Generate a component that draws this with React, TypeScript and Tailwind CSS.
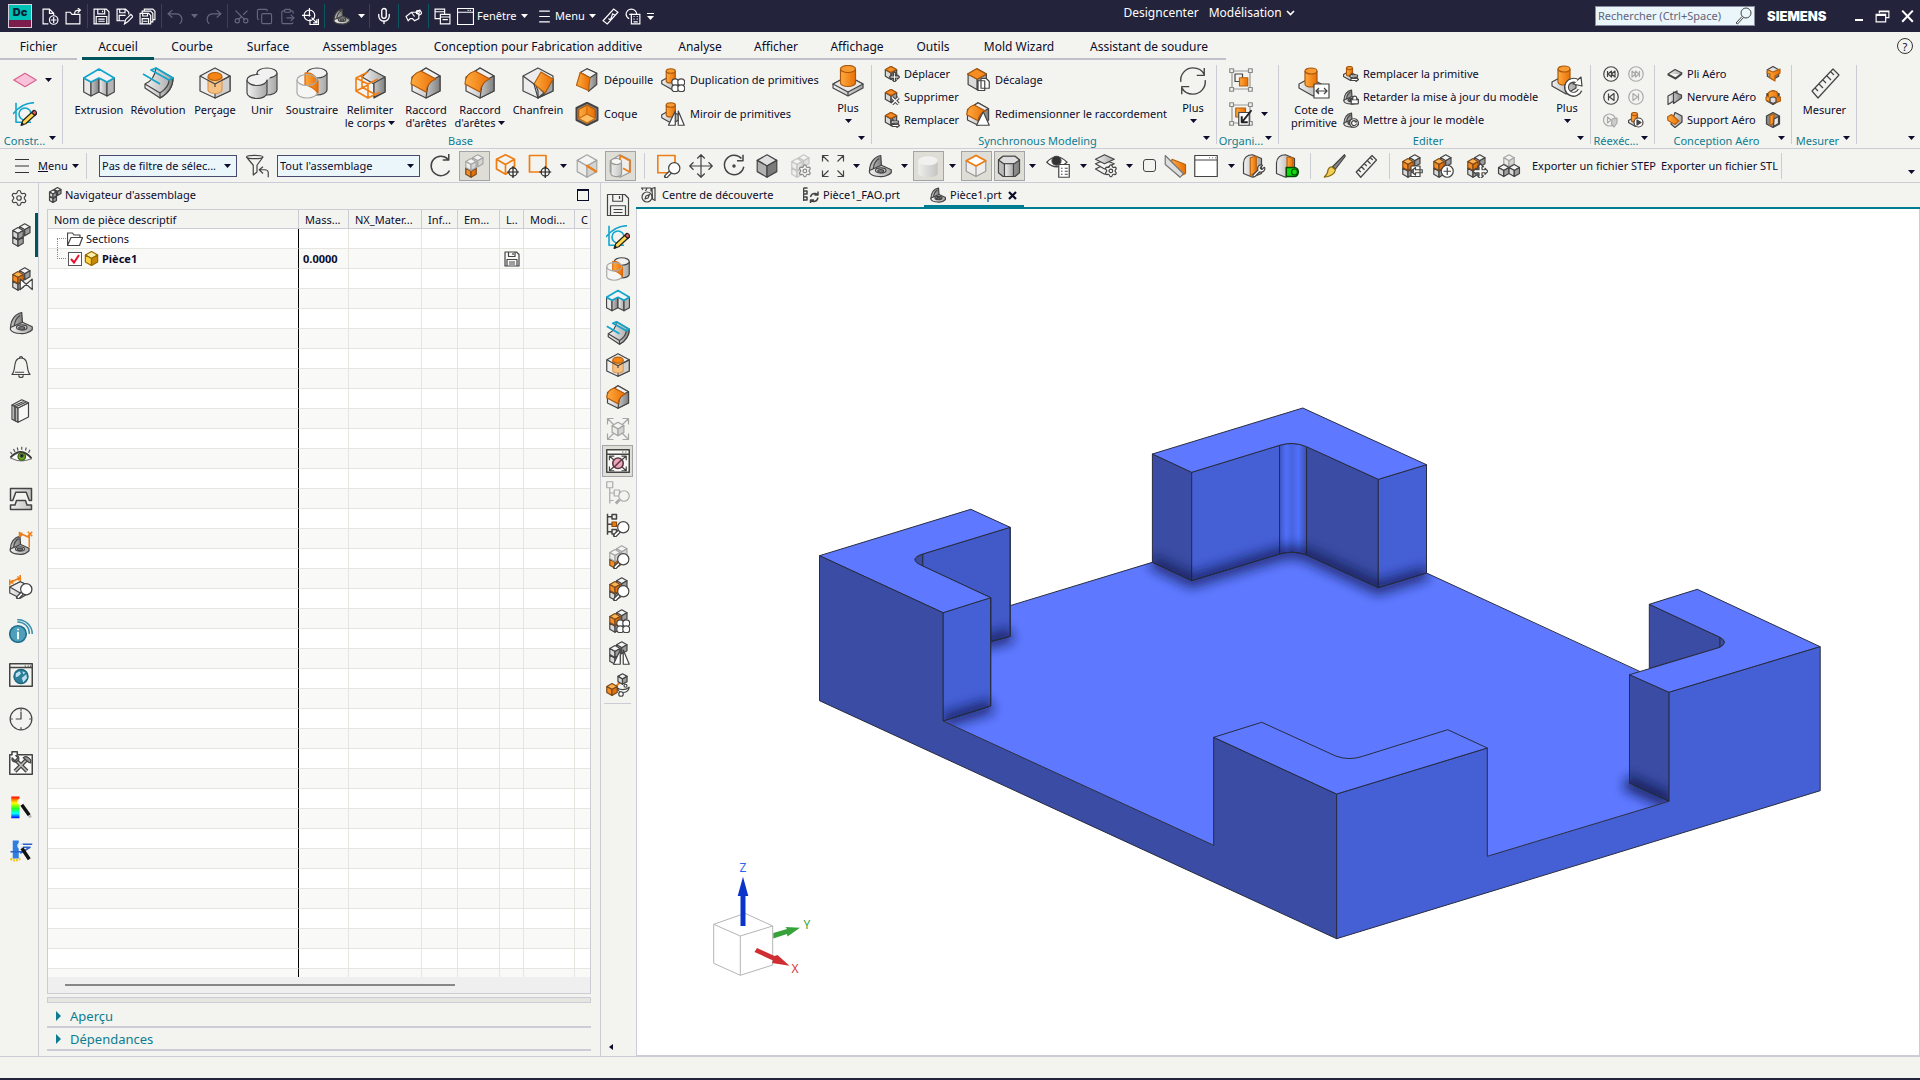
import React, { ReactNode } from "react";
import { Copy, ClipboardPaste, Mic, Scissors, Settings, Wrench, Lock } from "lucide-react";

const INK = "#444444";
const CYAN = "#12a6cc";
const ORANGE = "#ef7d14";

/* ---------- drawing helpers, all on a 32-unit grid ---------- */

type Tone = "g" | "o" | "w" | "y" | "d";
const TONES: Record<Tone, [string, string, string, string]> = {
  g: ["#f4f4f4", "#dadada", "#9d9d9d", INK],
  o: ["#ffb14d", "#f78d22", "#e57208", "#7a4a20"],
  w: ["#f4f4f2", "#ececea", "#d4d4d2", "#a5a5a5"],
  y: ["#fff0a8", "#ffd33f", "#c98a0a", "#9a6a00"],
  d: ["#e0e0e0", "#b2b2b2", "#7b7b7b", INK],
};

function Cube({ x, y, r, t = "g" }: { x: number; y: number; r: number; t?: Tone }) {
  const [top, left, right, line] = TONES[t];
  const w = r * 0.87;
  const h = r / 2;
  return (
    <g stroke={line}>
      <polygon fill={top} points={`${x},${y - r} ${x + w},${y - h} ${x},${y} ${x - w},${y - h}`} />
      <polygon fill={left} points={`${x - w},${y - h} ${x},${y} ${x},${y + r} ${x - w},${y + h}`} />
      <polygon fill={right} points={`${x},${y} ${x + w},${y - h} ${x + w},${y + h} ${x},${y + r}`} />
    </g>
  );
}

function Cyl({ x, y, rx, ry, h, o = false }: { x: number; y: number; rx: number; ry: number; h: number; o?: boolean }) {
  return (
    <g stroke={o ? "#a8570c" : INK}>
      <path fill={o ? "url(#gO)" : "url(#gG)"} d={`M${x - rx} ${y} v${h} a${rx} ${ry} 0 0 0 ${rx * 2} 0 v${-h}`} />
      <ellipse fill={o ? "#f99b30" : "#f1f1f1"} cx={x} cy={y} rx={rx} ry={ry} />
    </g>
  );
}

const Boss = () => (
  <g>
    <path fill="url(#gG)" d="M1 19 L16 11 L31 19 V23 L16 31 L1 23 Z" />
    <path fill="#e9e9e9" d="M1 19 L16 11 L31 19 L16 27 Z" />
    <path d="M16 27 V31" />
    <Cyl x={16} y={4} rx={7.5} ry={3.5} h={14} o />
  </g>
);
const BossSmall = () => (
  <g>
    <path fill="url(#gG)" d="M1 17 L12 11 L25 18 V23 L15 29 L1 21 Z" />
    <Cyl x={13} y={4} rx={6} ry={3} h={13} o />
  </g>
);
const Bracket = () => (
  <g>
    <path fill="url(#gD)" d="M2 23 C2 12 8 4 17 2 L18 16 L8 21 Z" />
    <path fill="url(#gG)" d="M2 22 L18 15 L31 21 V25 C27 29 20 31 15 30 C9 30 4 28 2 25 Z" />
    <path fill="none" d="M7 20 C8 12 11 8 15 6" />
    <ellipse fill="#d7d7d7" cx="17" cy="22" rx="7" ry="3.4" />
    <ellipse fill="#8a8a8a" cx="17" cy="22.5" rx="4" ry="1.8" />
  </g>
);
const Stack = ({ a = "g", b = "g", c = "g" }: { a?: Tone; b?: Tone; c?: Tone }) => (
  <g>
    <Cube x={21} y={9} r={8} t={c} />
    <Cube x={12} y={23} r={8} t={b} />
    <Cube x={12} y={14} r={8} t={a} />
  </g>
);
const Lens = () => (
  <g>
    <path strokeWidth="4" strokeLinecap="round" d="M17 25 L12 30" stroke={INK} />
    <path strokeWidth="1.6" strokeLinecap="round" d="M17 25 L12.5 29.5" stroke="#fff" />
    <circle cx="23" cy="19" r="7.5" fill="#fff" />
  </g>
);
const Four = () => (
  <g fill="#fff">
    <circle cx="19" cy="19" r="4.6" /><circle cx="27" cy="19" r="4.6" />
    <circle cx="19" cy="27" r="4.6" /><circle cx="27" cy="27" r="4.6" />
  </g>
);
const Mirror = () => (
  <g fill="#fff"><path d="M19 12 V31 H10 Z" /><path d="M23 12 V31 H31 Z" /></g>
);
const Swap = () => (
  <path fill="#fff" d="M13 20 L18 15 V18 H29 V22 H18 V25 Z M31 27 L26 22 V25 H16 V29 H26 V31 Z" />
);
const Target = ({ x, y }: { x: number; y: number }) => (
  <g stroke="#222"><circle cx={x} cy={y} r="5.5" fill="#f3f4ef" /><path d={`M${x - 8} ${y} h16 M${x} ${y - 8} v16`} /></g>
);
const Wire = () => <path stroke={ORANGE} strokeWidth="1.7" d="M14 1 L26 7 V20 L14 27 L2 20 V7 Z M2 7 L14 14 L26 7 M14 14 V27" />;
const BlueSketch = () => (
  <g>
    <path stroke={CYAN} strokeWidth="1.6" d="M4 1 V27 H24 M0 16 C8 6 16 1 28 1" />
    <circle stroke={CYAN} strokeWidth="1.6" cx="16" cy="16" r="8" />
    <path fill="#ffd84d" stroke="#222" d="M11 31 L13 25 L27 12 L31 16 L17 29 Z" />
    <path fill="#f05a5a" stroke="#222" d="M25 14 L28 11 Q32 12 31 16 L29 18 Z" />
    <path fill="#222" stroke="#222" d="M11 31 L12 28 L14 30 Z" />
  </g>
);
const Round = () => (
  <g>
    <path fill="url(#gG)" d="M16 1 L30 9 V24 L16 31 L2 24 V10 Z" />
    <path fill="#f2f2f2" d="M16 1 L30 9 L24 13 L10 5 Z" />
    <path fill="url(#gD)" d="M17 24 C17 17 20 13 30 9 V24 L16 31 Z" />
    <path fill="url(#gO)" stroke="#b0570a" d="M1 17 C1 10 4 6 11 4 L26 12 C20 14 17 18 16 25 Z" />
  </g>
);
const Floppy = () => (
  <g>
    <path d="M2 2 H25 L30 7 V30 H2 Z" />
    <path d="M9 2 V11 H22 V2 M18 4 V8 M6 30 V17 H26 V30 M10 22 H22 M10 26 H22" />
  </g>
);
const Corners = ({ c = INK }: { c?: string }) => (
  <path stroke={c} d="M2 10 V2 H10 M2 2 L10 10 M22 2 H30 V10 M30 2 L22 10 M2 22 V30 H10 M2 30 L10 22 M30 22 V30 H22 M30 30 L22 22" />
);
const Win = () => <path fill="#fff" d="M1 2 H31 V30 H1 Z M1 8 H31 M20 5 h1 M24 5 h1 M28 5 h1" />;
const Ruler32 = () => (
  <path d="M3 24 L24 2 L30 8 L9 31 Z M6 21 l3 3 M10 17 l4 4 M14 13 l3 3 M18 9 l4 4 M22 5 l3 3" />
);
const GearMini = () => <Settings x={13} y={13} width={19} height={19} strokeWidth={1.2} color={INK} fill="#f3f4ef" />;
const Play = ({ d, c = INK }: { d: string; c?: string }) => (
  <g stroke={c}><circle cx="16" cy="16" r="14.5" /><path d={d} /></g>
);
const Frame = ({ children }: { children: ReactNode }) => (
  <g>
    <path stroke="#999" d="M4 4 H28 V28 H4 Z" />
    <g fill="#f3f4ef" stroke="#888"><path d="M1 1h5v5h-5z M26 1h5v5h-5z M1 26h5v5h-5z M26 26h5v5h-5z" /></g>
    {children}
  </g>
);

const ART: Record<string, ReactNode> = {
  plane: <path fill="#f8c3d8" stroke="#d9608f" d="M1 16 L16 7 L31 16 L16 25 Z" />,
  sketch: <BlueSketch />,
  extrude: (
    <g>
      <path fill="#e8e8e8" d="M.7 11 L8 15 V29 L.7 25 Z" />
      <path fill="url(#gD)" d="M8 15 L16 11 V25 L8 29 Z" />
      <path fill="url(#gG)" d="M16 11 L24 15 V29 L16 25 Z" />
      <path fill="#b5b5b5" d="M24 15 L31.3 11 V25 L24 29 Z" />
      <path fill="#f4f4f4" stroke={CYAN} strokeWidth="1.7" d="M16 2 L31.3 11 L24 15 L16 11 L8 15 L.7 11 Z" />
    </g>
  ),
  revolve: (
    <g>
      <path fill="url(#gG)" d="M3 17 V21 L18 31 C27 26 31 20 31 11 L14 1 C13 9 10 14 3 17 Z" />
      <path fill="url(#gD)" d="M18 26 C24 22 27 18 27 13 L31 11 C31 20 27 26 18 31 Z" />
      <path d="M3 17 L18 26" />
      <path stroke={CYAN} strokeWidth="1.7" d="M9 3 L14 1 L31 11 L27 13 Z M1 7 L18 17" />
    </g>
  ),
  hole: (
    <g>
      <path fill="#eeeeee" d="M16 1 L31 9 V24 L16 31 L1 24 V9 Z" />
      <path fill="#cfcfcf" d="M16 17 L31 9 V24 L16 31 Z" />
      <path fill="#f5c183" stroke="#d99a58" d="M9 10 V23 a7 3.5 0 0 0 14 0 V10" />
      <ellipse fill="#f58414" stroke="#b8600c" cx="16" cy="9.5" rx="7" ry="4" />
      <path d="M1 9 L16 17 L31 9 M16 17 V20" />
    </g>
  ),
  unite: (
    <g>
      <Cyl x={21} y={6} rx={10} ry={5} h={17} />
      <Cyl x={11} y={13} rx={10} ry={5.5} h={13} />
      <ellipse cx="17" cy="10" rx="7" ry="3.2" fill="#f1f1f1" stroke="none" />
    </g>
  ),
  subtract: (
    <g>
      <Cyl x={21} y={6} rx={10} ry={5} h={17} />
      <path fill="#f6f6f4" stroke="#aaa" d="M1 13 V26 a10 5 0 0 0 20 0 V13" />
      <path fill="url(#gO)" stroke="#d9680a" d="M9 6 C14 5 19 8 22 14 V26 C18 21 14 19 9 18 Z" />
      <ellipse cx="11" cy="13" rx="10" ry="5.5" stroke="#aaa" />
    </g>
  ),
  trim: (
    <g>
      <path fill="url(#gG)" d="M16 2 L31 10 V25 L20 31 V17 L8 10 Z" />
      <path fill="url(#gD)" d="M20 16 L31 10 V25 L20 30 Z" />
      <path stroke={ORANGE} strokeWidth="1.6" d="M2 11 L14 5 M2 11 L14 17 L14 31 L2 24 Z M14 17 L24 12 M8 7 V20 L22 28 M14 31 L26 25 M2 24 L14 18" />
    </g>
  ),
  blend: <Round />,
  chamfer: (
    <g>
      <path fill="#ececec" d="M16 1 L31 9 V24 L16 31 L1 24 V9 Z" />
      <path fill="#d2d2d2" d="M13 16 L22 26 L16 31 L16 24 Z" />
      <path fill="#a5a5a5" d="M31 12 V24 L16 31 L23 26 Z" />
      <path fill="url(#gO)" stroke="#b8600c" d="M19 5 L31 12 L23 26 L12 17 Z" />
      <path d="M1 9 L12 17 L16 31" />
    </g>
  ),
  draft: (
    <g>
      <path fill="url(#gD)" d="M16 1 L29 7 V22 L18 31 L18 13 Z" />
      <path fill="#f4f4f4" d="M16 1 L29 7 L20 13 L7 6 Z" />
      <path fill="url(#gO)" stroke="#b8600c" d="M7 6 L20 13 L18 30 L2 23 Z" />
    </g>
  ),
  shell: (
    <g>
      <path fill="#9a9a9a" strokeWidth="2" d="M16 1 L30 8 V24 L16 31 L2 24 V8 Z" />
      <path fill="url(#gO)" stroke="#a8570c" d="M16 4 L27 10 V22 L16 28 L5 22 V10 Z" />
      <path fill="#ffbd62" stroke="#c96a10" d="M5 22 L16 16 L27 22 L16 28 Z" />
      <path stroke="#c96a10" d="M16 4 V16" />
    </g>
  ),
  pattern: <g><BossSmall /><Four /></g>,
  mirrorf: <g><BossSmall /><Mirror /></g>,
  boss: <Boss />,
  bossdim: (
    <g><BossSmall /><path fill="#fff" d="M16 17 H31 V31 H16 Z M18 24 H29 M21 21 L18 24 L21 27 M26 21 L29 24 L26 27" /></g>
  ),
  bossredo: (
    <g><BossSmall />
      <path stroke={INK} strokeWidth="5" d="M27 17 A7 7 0 1 0 29 25" /><path fill="#fff" d="M22 19 L31 21 L30 12 Z" />
      <path stroke="#fff" strokeWidth="2.6" d="M26 16 A7 7 0 1 0 29 25" />
    </g>
  ),
  bossswap: <g><BossSmall /><Swap /></g>,
  bossplay: <g><BossSmall /><circle cx="21" cy="21" r="9" fill="#fff" /><path fill={INK} d="M18 16 L26 21 L18 26 Z" /></g>,
  moveface: (
    <g><Cube x={14} y={14} r={13} /><path fill="#f78d22" stroke="#a8570c" d="M14 1 L25 7 L14 13 L3 7 Z" />
      <path fill="#fff" d="M21 12 l4 4 h-2 v4 h4 v-2 l4 4 l-4 4 v-2 h-4 v4 h2 l-4 4 l-4 -4 h2 v-4 h-4 v2 l-4 -4 l4 -4 v2 h4 v-4 h-2z" /></g>
  ),
  delface: (
    <g><Cube x={14} y={14} r={13} /><path fill="#f78d22" stroke="#a8570c" d="M14 1 L25 7 L14 13 L3 7 Z" />
      <path strokeWidth="3.4" d="M16 17 L29 30 M29 17 L16 30" /><path stroke="#fff" strokeWidth="1.4" d="M16 17 L29 30 M29 17 L16 30" /></g>
  ),
  repface: <g><Cube x={14} y={14} r={13} /><path fill="#f78d22" stroke="#a8570c" d="M14 1 L25 7 L14 13 L3 7 Z" /><Swap /></g>,
  offset: (
    <g><Cube x={15} y={15} r={14} /><path fill="#f78d22" stroke="#a8570c" d="M14 1 L27 8 L15 15 L2 8 Z" />
      <path fill="#fff" d="M20 14 H27 L31 18 V27 H20 Z M16 17 H25 V30 H16 Z" /></g>
  ),
  resize: <g><Round /><path fill="#fff" d="M23 13 L31 31 H14 Z" /></g>,
  cycle: <path strokeWidth="1.4" d="M3 17 C2 9 8 2 16 2 C22 2 26 5 28 9 M28 2 V10 H20 M29 15 C30 23 24 30 16 30 C10 30 6 27 4 23 M4 30 V22 H12" />,
  group: <Frame><path fill="#f3f4ef" d="M8 8 H18 V18 H8 Z" /><path fill="url(#gO)" stroke="#b8600c" d="M14 13 H25 V24 H14 Z" /></Frame>,
  groupedit: (
    <Frame><path fill="url(#gO)" stroke="#b8600c" d="M9 8 H22 V20 H9 Z" /><path fill="#fff" d="M13 14 H27 V31 H13 Z" />
      <path strokeWidth="2" stroke="#222" d="M30 11 L18 26 M17 19 V27 H25" /></Frame>
  ),
  lockmodel: <g><Bracket /><Lock x={14} y={12} width={19} height={20} strokeWidth={1.2} color={INK} fill="#fff" /></g>,
  updmodel: <g><Bracket /><circle cx="22" cy="22" r="8.5" fill="#fff" /><path d="M26 19 A5 5 0 1 0 27 23 M27 17 V20 H23" /></g>,
  rew: <Play d="M9 10 V22 M17 10 L10 16 L17 22 Z M24 10 L17 16 L24 22 Z" />,
  fwd: <Play c="#aaa" d="M23 10 V22 M15 10 L22 16 L15 22 Z M8 10 L15 16 L8 22 Z" />,
  prev: <Play d="M11 9 V23 M22 9 L13 16 L22 23 Z" />,
  next: <Play c="#aaa" d="M21 9 V23 M10 9 L19 16 L10 23 Z" />,
  playto: <g stroke="#aaa"><circle cx="13" cy="16" r="12" /><path d="M9 10 V22 L16 16 Z" /><path fill="#ccc" d="M18 14 L28 12 V22 L22 30 L17 24 Z" /></g>,
  fold: <path fill="url(#gG)" d="M2 16 L16 7 L30 14 L17 24 Z M2 16 V18 L17 26 L30 16" />,
  rib: <g><path fill="url(#gG)" d="M2 14 L20 4 V20 L2 31 Z" /><path fill="url(#gD)" d="M13 6 L29 12 V18 L13 29 Z" /></g>,
  support: <g><path fill="url(#gG)" d="M16 1 L30 8 V20 L16 31 L8 24 Z" /><path fill="url(#gO)" stroke="#b8600c" d="M1 10 L9 5 L24 18 L16 25 L2 17 Z" /></g>,
  aero1: <g><Cube x={16} y={14} r={13} t="d" /><path fill="url(#gO)" stroke="#b8600c" d="M5 8 L16 12 L30 6 V14 L20 20 V30 L10 24 V16 L4 14 Z" /></g>,
  aero2: <g><Cube x={16} y={17} r={14} /><path fill="url(#gO)" stroke="#b8600c" d="M7 9 C7 2 25 2 25 9 V16 H31 V24 L16 29 L2 22 V16 H7 Z" /><path fill="#ddd" d="M10 18 Q16 14 22 18 V26 L16 29 L10 26 Z" /></g>,
  aero3: <g><path fill="#8a8a8a" d="M16 1 L29 8 V24 L16 31 L3 24 V8 Z" /><path fill="url(#gO)" stroke="#b8600c" d="M10 7 L18 4 V22 L10 27 Z" /><path fill="#e7e7e7" d="M18 14 L27 9 V23 L17 29 Z" /></g>,
  ruler: <Ruler32 />,
  filter: <path d="M2 4 C2 1 24 1 24 4 L16 15 V24 L11 28 V15 Z M2 4 C3 7 23 7 24 4 M31 31 V25 Q31 21 26 21 H20 M24 17 L19 21 L24 26" />,
  reset: <path strokeWidth="1.5" d="M28 7 A13 13 0 1 0 30 22 M29 0 V8 H21" />,
  selasm: <Stack a="w" b="o" c="w" />,
  selcube: <g><Wire /><Target x={24} y={24} /></g>,
  selbox: <g><path stroke={ORANGE} strokeWidth="1.7" d="M2 2 H24 V24 H2 Z" /><Target x={23} y={24} /></g>,
  faceedge: <g><Cube x={16} y={16} r={15} t="w" /><path stroke={ORANGE} strokeWidth="2.2" d="M15 15 L29 24" /></g>,
  cylcube: (
    <g stroke="#999"><path fill="#eeeeec" d="M16 1 L30 8 V24 L16 31 L3 24 V9 Z" /><path fill="url(#gS)" d="M4 11 V25 a7 4 0 0 0 14 2 V12" /><ellipse cx="11" cy="10" rx="7" ry="4" fill="#f6f6f4" />
      <path stroke={ORANGE} strokeWidth="1.7" d="M16 2 L29 9 V24 L20 19 M16 2 V8" /></g>
  ),
  zoombox: <g><path stroke={ORANGE} strokeWidth="1.7" d="M1 2 H24 V25 H1 Z" /><Lens /></g>,
  pan: <path d="M16 1 V31 M1 16 H31 M11 6 L16 1 L21 6 M11 26 L16 31 L21 26 M6 11 L1 16 L6 21 M26 11 L31 16 L26 21" />,
  orbit: <g><path strokeWidth="1.5" d="M26 6 A13 13 0 1 0 29 17 M28 1 V9 H20" /><circle cx="16" cy="16" r="1.5" fill={INK} /></g>,
  cubed: <Cube x={16} y={16} r={15} t="d" />,
  cubegear: <g opacity=".6"><Stack a="w" b="w" c="w" /><GearMini /></g>,
  fit: <Corners />,
  bracket: <Bracket />,
  shaded: <g stroke="none"><path fill="url(#gS)" d="M3 9 V26 a13 5 0 0 0 26 0 V9" /><ellipse cx="16" cy="9" rx="13" ry="6" fill="#f0f0ee" /></g>,
  wirecube: <g stroke="#999"><path fill="#eeeeec" d="M16 2 L29 9 V23 L16 30 L3 23 V9 Z M16 16 V30" /><path fill="#fff" stroke={ORANGE} strokeWidth="1.8" d="M16 2 L29 9 L16 16 L3 9 Z" /></g>,
  cylhex: <g><path fill="url(#gD)" d="M8 3 H24 L30 8 V25 L24 30 H8 L2 25 V8 Z" /><path fill="#ddd" d="M8 3 H24 L30 8 L23 13 H9 L2 8 Z" /><path fill="url(#gG)" d="M10 13 H22 V30 H10 Z" /></g>,
  eyelist: (
    <g><path fill="#fff" d="M1 11 Q14 -3 28 11 Q14 23 1 11 Z" /><circle cx="14" cy="9" r="6" fill="#333" />
      <path fill="#fff" d="M17 14 H31 V31 H17 Z" /><path d="M20 19h2 M25 19h4 M20 23h2 M25 23h4 M20 27h2 M25 27h4" /></g>
  ),
  layers: (
    <g><path fill="#f3f4ef" d="M2 20 L14 14 L27 20 L14 27 Z" /><path fill="#f3f4ef" d="M2 13 L14 8 L27 13 L14 20 Z" />
      <path fill="url(#gG)" d="M2 7 L14 1 L27 7 L14 13 Z" /><GearMini /></g>
  ),
  section: <g><path fill="url(#gO)" stroke="#b8600c" d="M12 7 L30 14 V26 L22 30 L10 18 Z" /><path fill="#ddd" stroke="#777" d="M3 2 L27 26 L23 31 L3 14 Z" /></g>,
  win: <Win />,
  partwrench: (
    <g><path fill="url(#gG)" d="M2 26 V12 Q3 1 14 1 L26 6 V26 L14 31 Z" /><path fill="url(#gO)" stroke="#b8600c" d="M11 5 L19 3 V24 L11 29 Z" />
      <Wrench x={13} y={13} width={19} height={19} strokeWidth={1.2} color={INK} fill="#fff" /></g>
  ),
  partgreen: (
    <g><path fill="url(#gG)" d="M2 26 V12 Q3 1 14 1 L26 6 V26 L14 31 Z" /><path fill="url(#gO)" stroke="#b8600c" d="M16 4 L24 5 V22 L16 24 Z" />
      <path fill="#0ddc0d" stroke="#044d04" strokeWidth="1.6" d="M15 18 H26 a5 6 0 0 1 0 12 H15 Z" /><circle cx="26" cy="24" r="4" stroke="#044d04" /></g>
  ),
  brush: <g><path fill="#888" d="M30 1 L31 3 L18 20 L14 17 Z" /><path fill="#f3cf5a" stroke="#8a6d10" d="M13 17 L18 21 Q17 29 3 31 Q8 26 8 21 Q10 17 13 17 Z" /></g>,
  asmin: <g><Stack a="o" /><path fill="#fff" d="M16 16 H28 V30 H16 Z M31 21 H22 V18 L16 23 L22 28 V25 H31 Z" /></g>,
  asmplus: <g><Stack a="o" /><circle cx="23" cy="23" r="8" fill="#fff" /><path d="M23 18 V28 M18 23 H28" /></g>,
  asmmove: (
    <g><Stack a="o" />
      <path fill="#fff" d="M22 13 l4 4 h-2 v4 h4 v-2 l4 4 l-4 4 v-2 h-4 v4 h2 l-4 4 l-4 -4 h2 v-4 h-4 v2 l-4 -4 l4 -4 v2 h4 v-4 h-2z" /></g>
  ),
  three: <g><Cube x={16} y={9} r={8} t="w" /><Cube x={9} y={22} r={8} /><Cube x={23} y={22} r={8} /></g>,
  asm: <Stack />,
  asmcons: <g><Stack a="o" /><path fill="#fff" d="M15 16 L31 30 V16 L15 30 Z" /></g>,
  asmlens: <g><Stack a="w" b="o" c="w" /><Lens /></g>,
  asmlens2: <g><Stack a="o" /><Lens /></g>,
  asmfour: <g><Stack a="o" /><Four /></g>,
  asmmirror: <g><Stack /><Mirror /></g>,
  explode: (
    <g><path stroke={ORANGE} strokeWidth="2" d="M11 20 L20 11" /><Cube x={22} y={8} r={7} /><Cube x={8} y={22} r={8} t="o" />
      <path fill="#fff" d="M15 20 Q23 25 31 19 Q30 26 22 26 Q16 25 15 20 Z" /><circle cx="20" cy="28" r="3" fill="#fff" /><circle cx="26" cy="17" r="2" fill="#fff" /></g>
  ),
  gear: <Settings width={32} height={32} strokeWidth={1.2} color={INK} />,
  bell: <path d="M16 4 C8 4 8 12 7 19 Q6 24 4 26 H28 Q26 24 25 19 C24 12 24 4 16 4 Z M14 4 a2 2 0 0 1 4 0 M13 27 a3 3 0 0 0 6 0 M8 23 H20" />,
  books: <g fill="#f8f8f6"><path d="M4 8 L12 12 V31 L4 27 Z" /><path d="M12 12 L26 5 V24 L12 31 Z" /><path d="M4 8 L17 1 L26 5 L12 12 Z M7 9 L20 3 M10 10 L23 4 M7 10 V29 M9 11 V30" /></g>,
  eye: (
    <g><path fill="#fff" stroke="#777" d="M2 20 Q16 6 30 21 Q16 27 2 20 Z" /><circle cx="17" cy="18" r="5" fill="#6cae1f" stroke="#2d5a0c" />
      <circle cx="17" cy="17" r="2" fill="#111" /><path stroke="#333" strokeWidth="1.6" d="M2 19 Q16 4 30 20" />
      <path stroke="#555" d="M4 15 L2 12 M8 12 L6 8 M12 10 L11 6 M17 9 V5 M22 10 L23 6 M26 13 L28 9" /></g>
  ),
  mold: <g fill="url(#gS)" strokeWidth="1.5"><path d="M2 2 H30 V18 H27 L23 7 H9 L5 18 H2 Z" /><path d="M2 30 V24 H8 L10 18 H22 L24 24 H30 V30 Z" /></g>,
  bracketdim: <g><g transform="translate(0 5) scale(.86)"><Bracket /></g><path stroke={ORANGE} strokeWidth="1.5" d="M14 1 V8 M14 3 L28 9 M18 3 L14 3 L17 7 M27 4 V22 M25 1 L31 7 M31 1 L25 7" /></g>,
  blockdim: (
    <g><path fill="url(#gG)" d="M1 16 L15 9 L30 16 V22 L15 31 L1 24 Z" /><path fill="#f0f0f0" d="M1 16 L15 9 L30 16 L15 24 Z M15 24 V31" />
      <path stroke={ORANGE} strokeWidth="1.5" d="M1 6 V14 M15 0 V8 M2 10 L14 4 M5 7 L2 10 L6 11 M11 2 L14 4 L12 7" /><Lens /></g>
  ),
  info: (
    <g><circle cx="12" cy="20" r="11" fill="#4f9fbb" stroke="#1c6e8c" strokeWidth="1.6" /><path stroke="#fff" strokeWidth="1.8" d="M12 17 V27 M12 13 V15" />
      <path stroke="#3c8fae" strokeWidth="1.5" d="M11 4 A15 15 0 0 1 27 20 M11 1 A19 19 0 0 1 31 20" /></g>
  ),
  globe: (
    <g><path strokeWidth="1.5" d="M1 1 H31 V31 H1 Z M1 6 H31 M21 4 h1 M25 4 h1 M28 4 h1" /><circle cx="16" cy="18" r="9.5" fill="#2d7f9c" stroke="#1b6480" />
      <path fill="#bfe3ee" stroke="none" d="M9 14 L14 11 L16 14 L12 18 L9 19 Z M17 20 L23 15 L24 20 L19 26 Z M18 11 L22 13 L19 15 Z" /></g>
  ),
  clock: <g><circle cx="16" cy="16" r="14.5" /><path d="M16 6 V16 H9 M16 2 V5 M16 27 V30 M2 16 H5 M27 16 H30" /></g>,
  tools: (
    <g><path fill="#fafaf8" strokeWidth="1.5" d="M1 5 H4 V1 H11 V5 H31 V31 H1 Z" /><path strokeWidth="4" d="M8 27 L24 11 M9 12 L24 27" />
      <path stroke="#bbb" strokeWidth="1.6" d="M8 27 L24 11 M9 12 L24 27" /><path fill="#999" d="M4 9 L8 13 L12 9 L9 6 Q14 6 13 12 L9 15 Q3 14 4 9 Z M19 9 Q24 5 29 12 V16 L26 15 Z" /></g>
  ),
  spectrum: (
    <g stroke="none"><path fill="url(#gR)" d="M3 2 H14 V31 H3 Z" /><path stroke="#111" strokeWidth="3.4" d="M17 13 L27 27" />
      <path stroke="#bbb" strokeWidth="3" d="M27 27 L29 30" /><circle cx="15" cy="9" r="4" fill="#fff" opacity=".8" /></g>
  ),
  analysis: (
    <g stroke="none"><path fill="#2f7fe0" d="M5 2 H13 V26 H5 Z" /><path stroke="#2b5fc9" strokeWidth="1.6" d="M14 7 H31 M15 11 H28 L15 19 M2 17 H22" />
      <path stroke="#f2c51c" strokeWidth="2.4" strokeDasharray="2 1" d="M2 26 Q8 31 15 26" /><path stroke="#111" strokeWidth="3.4" d="M17 12 L27 27" />
      <circle cx="15" cy="9" r="4" fill="#fff" opacity=".8" /></g>
  ),
  floppy: <Floppy />,
  fitgray: <g><Corners c="#a5a5a5" /><Cube x={16} y={16} r={9} t="w" /></g>,
  winno: (
    <g><path fill="#f8f8f4" strokeWidth="1.5" d="M1 1 H31 V31 H1 Z M1 7 H31 M22 4h1 M26 4h1" /><g transform="translate(3 8) scale(.8 .7)"><Corners /></g>
      <circle cx="16" cy="19" r="7" fill="#f2a6be" stroke="#5a3a44" strokeWidth="1.6" /><path stroke="#5a3a44" strokeWidth="1.6" d="M11 24 L21 14" /></g>
  ),
  treegray: <g stroke="#aaa"><path d="M1 1 H9 V9 H1 Z M5 9 V30 M5 16 H11 M5 26 H10 M11 12 H18 V20 H11 Z" /><circle cx="24" cy="20" r="7" fill="#f3f4ef" /><path strokeWidth="3" d="M18 25 L13 30" /></g>,
  tree: (
    <g><path strokeWidth="1.5" d="M2 1 V29 M2 5 H8 M2 15 H8 M2 25 H8 M8 2 H14 V8 H8 Z M8 22 H14 V28 H8 Z" />
      <path fill={ORANGE} stroke="#8a4a0a" d="M8 12 H14 V18 H8 Z" /><Lens /></g>
  ),
  discover: <g><path d="M4 6 L1 2 H12 L9 8 M12 2 H20 V9 M22 3 L28 1 V27 L23 24 Z" /><circle cx="12" cy="20" r="10" fill="#f3f4ef" /><path d="M8 24 L10 18 L17 15 L14 22 Z" /></g>,
  cam: <g><path strokeWidth="1.5" d="M1 2 H9 M1 2 V28 M1 8 H8 V14 H1 M1 20 H8 V26 H1" /><path strokeWidth="1.5" d="M15 20 Q17 12 25 13 L29 15 M30 9 V16 H23 M30 21 Q28 30 20 29 L16 27 M15 32 V26 H22" /></g>,
  folder: <path fill="#fff" d="M1 29 V4 H11 L14 8 H26 V13 M1 29 L8 13 H31 L25 29 Z" />,
  part: <Cube x={16} y={16} r={15} t="y" />,
};

function Art({ n, s = 24 }: { n: string; s?: number }) {
  return (
    <svg
      width={s} height={s} viewBox="0 0 32 32" fill="none" stroke={INK} strokeWidth="1.2" strokeLinejoin="round"
      aria-hidden="true" className="shrink-0 [&_*]:[vector-effect:non-scaling-stroke]"
    >
      {ART[n]}
    </svg>
  );
}

function Caret({ className = "" }: { className?: string }) {
  return (
    <svg viewBox="0 0 7 4" aria-hidden="true" className={"h-1 w-[7px] shrink-0 fill-current " + className}>
      <path d="M0 0 H7 L3.5 4 Z" />
    </svg>
  );
}

/* ---------- title bar ---------- */

const T = ({ children, label, w = "w-[23px]", dim = false }: { children: ReactNode; label: string; w?: string; dim?: boolean }) => (
  <button type="button" aria-label={label} className={"flex h-full shrink-0 items-center justify-center " + w + (dim ? " text-[#67677c]" : " text-white")}>
    {children}
  </button>
);
const G16 = ({ d, children }: { d?: string; children?: ReactNode }) => (
  <svg width="17" height="17" viewBox="0 0 16 16" fill="none" stroke="currentColor" strokeWidth="1.1" aria-hidden="true">
    {d && <path d={d} />}
    {children}
  </svg>
);
const TSep = () => <span className="mx-0.5 h-6 w-px shrink-0 bg-[#0b5660]" />;

function TitleBar() {
  return (
    <header className="flex h-8 shrink-0 items-center bg-[#23233c] text-white">
      <span className="mr-[7px] ml-2 flex size-6 shrink-0 flex-col border border-[#d8cfd8] bg-[#00c1b6] text-center">
        <b className="h-[15px] font-['Inter',sans-serif] text-[11px] leading-[15px] font-black text-[#04203a]">Dc</b>
        <i className="flex-1 bg-[#7d1d4c]" />
      </span>
      <T label="Nouveau"><G16 d="M6 15 H1 V1 H7 L11 5 V7 M7 1 V5 H11 M11 8.5 V14 M8.3 11.3 H13.7"><circle cx="11" cy="11.3" r="4" /></G16></T>
      <T label="Ouvrir"><G16 d="M1 15 V4 H5 L6.5 6 H14 V15 Z M9 6 C9 3 10 2 14 2 M12 0 L14.5 2 L12 4.5" /></T>
      <TSep />
      <T label="Enregistrer"><G16 d="M1 1 H12.5 L15 3.5 V15 H1 Z M4.5 1 V5.5 H11 V1 M9 2.5 V4 M3 15 V8 H13 V15 M5 10.5 H11 M5 12.5 H11" /></T>
      <T label="Enregistrer sous"><G16 d="M8 12 H1 V1 H9 L12 4 V6 M3.5 1 V4.5 H8.5 V1 M3 12 V7 H9 M8 15 L9 11 L14 6 L16 8 L11 13 Z" /></T>
      <T label="Tout enregistrer"><G16 d="M1 5 H9 L11 7 V15 H1 Z M3 15 V10 H9 V15 M3 5 V3 H11 L13 5 V13 H11 M5 3 V1 H13 L15 3 V11 H13 M4 12.5 H8 M3.5 5 V7.5 H8 V5" /></T>
      <TSep />
      <T label="Annuler" dim><G16 d="M5 2 L1 5.5 L5 9 M1 5.5 H9 Q14 6 14 11 Q14 13 12 15" /></T>
      <T label="Historique d'annulation" w="w-[15px]" dim><Caret /></T>
      <T label="Rétablir" dim><G16 d="M11 2 L15 5.5 L11 9 M15 5.5 H7 Q2 6 2 11 Q2 13 4 15" /></T>
      <TSep />
      <T label="Couper" dim><Scissors size={17} strokeWidth={1.6} className="-rotate-90" /></T>
      <T label="Copier" dim><Copy size={17} strokeWidth={1.6} /></T>
      <T label="Coller" dim><ClipboardPaste size={17} strokeWidth={1.6} /></T>
      <T label="Répéter"><G16 d="M7 0 V8 M0 7 H8 M15.5 10 V15.5 H7.5 V10.5 M9 9 L14 14 M14 10.5 V14 H10.5"><circle cx="7" cy="7" r="5" /></G16></T>
      <TSep />
      <T label="Pièce" w="w-7"><Art n="bracket" s={17} /></T>
      <T label="Options de pièce" w="w-3"><Caret /></T>
      <TSep />
      <T label="Dictée" w="w-6"><Mic size={18} strokeWidth={1.8} /></T>
      <TSep />
      <T label="Toucher" w="w-[25px]"><G16 d="M1 8 L6 4 H11 L13 6 V10 L9 12 L7 10 H5 L3 12 Z M11 4 L14 2 L16 5 L13 7 M6 4 L9 8"><circle cx="12" cy="4" r="1.5" /></G16></T>
      <TSep />
      <T label="Fenêtres"><G16 d="M1 1 H10 V10 H1 Z M1 3.5 H10"><path fill="#23233c" d="M6 6 H15 V15 H6 Z M6 8.5 H15 M8 11 H13" /></G16></T>
      <button type="button" className="flex shrink-0 items-center">
        <span className="flex w-[23px] justify-center"><G16 d="M.5 .5 H15.5 V15.5 H.5 Z M.5 4 H15.5 M10 2.3 h1 M12 2.3 h1" /></span>
        <span className="w-11 text-left">Fenêtre</span><Caret />
      </button>
      <button type="button" className="ml-2 flex shrink-0 items-center">
        <G16 d="M3 3 H13 M3 8 H13 M3 13 H13" /><span className="ml-0.5 w-[34px] text-left">Menu</span><Caret />
      </button>
      <T label="Mesurer" w="w-7"><G16 d="M1 12 L11 1 L15 4 L5 15 Z M6 10 L8 11 L10 5.5 L12 6.5" /></T>
      <T label="Commandes" w="w-[18px]"><G16 d="M1 6 a5 5 0 0 1 10 0 M4 10 A5 5 0 0 1 1 6 M4 6 H7"><path fill="#23233c" d="M6 6 H14 V15 H6 Z M8 8h1 M11 8h1 M8 10.5h1 M11 10.5h1 M8 13h4" /></G16></T>
      <T label="Plus d'options" w="w-4"><span className="flex flex-col items-center gap-0.5"><i className="h-px w-[7px] bg-white" /><Caret /></span></T>
      <span className="flex-[462]" />
      <button type="button" className="flex shrink-0 items-center gap-2.5 pb-1.5 text-xs">
        <span>Designcenter</span>
        <span className="flex items-center gap-1">Modélisation
          <svg width="9" height="6" viewBox="0 0 9 6" fill="none" stroke="#fff" strokeWidth="1.6" aria-hidden="true"><path d="M1 1 L4.5 4.5 L8 1" /></svg>
        </span>
      </button>
      <span className="flex-[298]" />
      <label className="flex h-5 w-40 shrink-0 items-center border border-[#8b8ba0] bg-[#eaf6fa] text-[#333]">
        <input aria-label="Rechercher" placeholder="Rechercher (Ctrl+Space)" className="w-full min-w-0 bg-transparent pl-0.5 outline-none placeholder:text-[#63637a]" />
        <svg width="17" height="18" viewBox="0 0 17 18" fill="none" stroke="#444" className="mr-0.5 shrink-0" aria-hidden="true"><circle cx="11" cy="6" r="5" /><path d="M7 9.5 L1 16 L2.5 17 L8.5 10.5" /></svg>
      </label>
      <b className="mx-3 w-[70px] shrink-0 font-['Inter',sans-serif] text-[13px] font-black">SIEMENS</b>
      <button type="button" aria-label="Réduire" className="flex h-full w-5 items-center justify-center pt-2"><i className="h-0.5 w-2 bg-white" /></button>
      <button type="button" aria-label="Restaurer" className="flex h-full w-[26px] items-center justify-center"><G16 d="M5 5 V3 H14 V9 H11 M5 3.5 H14 M2 6 H11 V13 H2 Z M2 7 H11" /></button>
      <button type="button" aria-label="Fermer" className="flex h-full w-[25px] items-center justify-center"><G16><path strokeWidth="1.9" d="M3 2.5 L13 13 M13 2.5 L3 13" /></G16></button>
    </header>
  );
}

/* ---------- ribbon tabs ---------- */

const TABS: [string, string][] = [
  ["Accueil", "w-[72px]"], ["Courbe", "w-[76px]"], ["Surface", "w-[76px]"], ["Assemblages", "w-[108px]"],
  ["Conception pour Fabrication additive", "w-[248px]"], ["Analyse", "w-[76px]"], ["Afficher", "w-[76px]"],
  ["Affichage", "w-[86px]"], ["Outils", "w-[66px]"], ["Mold Wizard", "w-[106px]"], ["Assistant de soudure", "w-[154px]"],
];

function TabRow() {
  return (
    <nav className="flex h-7 shrink-0 items-stretch text-xs">
      <button type="button" className="mr-[5px] w-[77px] border-b-2 border-[#c0c0ca] pt-1">Fichier</button>
      {TABS.map(([name, w]) => (
        <button key={name} type="button" className={"shrink-0 pt-1 whitespace-nowrap " + w + (name === "Accueil" ? " border-b-3 border-[#00555c]" : " border-b-2 border-[#c0c0ca]")}>
          {name}
        </button>
      ))}
      <button type="button" aria-label="Aide" className="mr-[7px] ml-auto">
        <span className="flex size-4 items-center justify-center rounded-full border border-[#333] text-[11px] leading-none">?</span>
      </button>
    </nav>
  );
}

/* ---------- ribbon ---------- */

function Big({ n, w, lines, drop = false }: { n: string; w: string; lines: string[]; drop?: boolean }) {
  return (
    <button type="button" className={"flex shrink-0 flex-col items-center pt-[7px] " + w}>
      <Art n={n} s={32} />
      <span className="mt-1 leading-[13px] whitespace-nowrap">
        {lines[0]}
        {lines[1] && <><br />{lines[1]}</>}
        {drop && <Caret className="mb-0.5 ml-[3px] inline-block" />}
      </span>
    </button>
  );
}
function Plus({ n, w, s = 32 }: { n: string; w: string; s?: number }) {
  return (
    <button type="button" className={"flex shrink-0 flex-col items-center pt-[5px] " + w}>
      <span className="flex h-8 items-center"><Art n={n} s={s} /></span>
      <span className="mt-[3px] leading-[15px]">Plus</span>
      <Caret className="mt-1" />
    </button>
  );
}
function Mid({ n, label }: { n: string; label: string }) {
  return (
    <button type="button" className="flex h-[34px] items-center gap-[5px] whitespace-nowrap"><Art n={n} s={24} />{label}</button>
  );
}
function Small({ n, label }: { n: string; label: string }) {
  return (
    <button type="button" className="flex h-[23px] items-center gap-1 whitespace-nowrap"><Art n={n} s={16} />{label}</button>
  );
}
function Group({ w, label, children, pad = "pl-0" }: { w: string; label: string; children: ReactNode; pad?: string }) {
  return (
    <section className={"relative flex shrink-0 flex-col " + w}>
      <div className={"flex h-[73px] " + pad}>{children}</div>
      <footer className="flex items-start pr-[7px] text-[#0d7c92]">
        <span className="flex-1 overflow-hidden text-center leading-[15px] whitespace-nowrap">{label}</span>
        <Caret className="mt-[3px] text-[#0b0b2c]" />
      </footer>
      <i className="absolute top-[5px] right-0 h-[79px] w-px bg-[#cbccd6]" />
    </section>
  );
}

function Ribbon() {
  return (
    <div className="flex h-[89px] shrink-0 border-b border-[#cbccd6]">
      <Group w="w-[63px]" label="Constr..." pad="pl-[13px]">
        <div className="flex flex-col pt-[3px]">
          <button type="button" aria-label="Plan de référence" className="flex h-[34px] items-center gap-2"><Art n="plane" /><Caret /></button>
          <button type="button" aria-label="Esquisse" className="flex h-[34px] items-center"><Art n="sketch" /></button>
        </div>
      </Group>
      <Group w="w-[809px]" label="Base" pad="pl-2">
        <Big n="extrude" w="w-[56px]" lines={["Extrusion"]} />
        <Big n="revolve" w="w-[62px]" lines={["Révolution"]} />
        <Big n="hole" w="w-[52px]" lines={["Perçage"]} />
        <Big n="unite" w="w-[42px]" lines={["Unir"]} />
        <Big n="subtract" w="w-[58px]" lines={["Soustraire"]} />
        <Big n="trim" w="w-[58px]" lines={["Relimiter", "le corps"]} drop />
        <Big n="blend" w="w-[54px]" lines={["Raccord", "d'arêtes"]} />
        <Big n="blend" w="w-[54px]" lines={["Raccord", "d'arêtes"]} drop />
        <Big n="chamfer" w="w-[62px]" lines={["Chanfrein"]} />
        <div className="flex w-[88px] flex-col pt-[3px] pl-1.5"><Mid n="draft" label="Dépouille" /><Mid n="shell" label="Coque" /></div>
        <div className="flex w-[169px] flex-col pt-[3px] pl-1"><Mid n="pattern" label="Duplication de primitives" /><Mid n="mirrorf" label="Miroir de primitives" /></div>
        <Plus n="boss" w="w-[44px]" />
      </Group>
      <Group w="w-[345px]" label="Synchronous Modeling" pad="pl-[12px]">
        <div className="flex w-[82px] flex-col pt-0.5"><Small n="moveface" label="Déplacer" /><Small n="delface" label="Supprimer" /><Small n="repface" label="Remplacer" /></div>
        <div className="flex w-[205px] flex-col pt-[3px]"><Mid n="offset" label="Décalage" /><Mid n="resize" label="Redimensionner le raccordement" /></div>
        <Plus n="cycle" w="w-[44px]" s={30} />
      </Group>
      <Group w="w-[62px]" label="Organi..." pad="pl-[12px]">
        <div className="flex flex-col pt-[3px]">
          <button type="button" aria-label="Grouper" className="flex h-[34px] items-center"><Art n="group" /></button>
          <button type="button" aria-label="Modifier le groupe" className="flex h-[34px] items-center gap-2"><Art n="groupedit" /><Caret /></button>
        </div>
      </Group>
      <Group w="w-[312px]" label="Editer" pad="pl-1.5">
        <Big n="bossdim" w="w-[58px]" lines={["Cote de", "primitive"]} />
        <div className="flex w-[202px] flex-col pt-0.5"><Small n="bossswap" label="Remplacer la primitive" /><Small n="lockmodel" label="Retarder la mise à jour du modèle" /><Small n="updmodel" label="Mettre à jour le modèle" /></div>
        <Plus n="bossredo" w="w-[44px]" />
      </Group>
      <Group w="w-[64px]" label="Réexéc..." pad="pl-[12px]">
        <div className="grid auto-rows-[23px] grid-cols-2 gap-x-[9px] pt-0.5">
          {["rew", "fwd", "prev", "next", "playto", "bossplay"].map((n) => (
            <button key={n} type="button" aria-label={n} className="flex items-center"><Art n={n} s={16} /></button>
          ))}
        </div>
      </Group>
      <Group w="w-[137px]" label="Conception Aéro" pad="pl-[12px]">
        <div className="flex w-[98px] flex-col pt-0.5"><Small n="fold" label="Pli Aéro" /><Small n="rib" label="Nervure Aéro" /><Small n="support" label="Support Aéro" /></div>
        <div className="grid auto-rows-[23px] pt-0.5">
          {["aero1", "aero2", "aero3"].map((n) => (
            <button key={n} type="button" aria-label={n} className="flex items-center"><Art n={n} s={16} /></button>
          ))}
        </div>
      </Group>
      <Group w="w-[65px]" label="Mesurer"><Big n="ruler" w="w-full" lines={["Mesurer"]} /></Group>
      <button type="button" aria-label="Options du ruban" className="mt-[76px] mr-[5px] ml-auto self-start"><Caret /></button>
    </div>
  );
}

/* ---------- selection bar ---------- */

const B = ({ n, w, on = false }: { n: string; w: string; on?: boolean }) => (
  <button type="button" aria-label={n} aria-pressed={on} className={"flex shrink-0 items-center justify-center " + w}>
    <span className={"flex items-center justify-center " + (on ? "h-[30px] w-[31px] border border-[#a3a3a8] bg-[#deded6]" : "size-6")}><Art n={n} /></span>
  </button>
);
const C = ({ w = "w-3.5" }: { w?: string }) => (
  <button type="button" aria-label="Plus de choix" className={"flex shrink-0 items-center justify-center self-stretch " + w}><Caret /></button>
);
const Sep = ({ m = "mx-[7px]" }: { m?: string }) => <i className={"h-[26px] w-px shrink-0 bg-[#cbccd6] " + m} />;

function Pick({ label, value, w }: { label: string; value: string; w: string }) {
  return (
    <span className={"relative shrink-0 " + w}>
      <select aria-label={label} className="h-[22px] w-full appearance-none border border-[#4a4a70] bg-[#eaf6fa] pl-0.5 outline-none"><option>{value}</option></select>
      <Caret className="pointer-events-none absolute top-[9px] right-1.5" />
    </span>
  );
}

function SelectionBar() {
  return (
    <div className="flex h-[34px] shrink-0 items-center border-b border-[#cbccd6]">
      <button type="button" className="ml-[15px] flex shrink-0 items-center">
        <svg width="14" height="14" viewBox="0 0 14 14" stroke="#333" aria-hidden="true"><path d="M0 .5 H14 M0 7 H14 M0 13.5 H14" /></svg>
        <span className="ml-[9px] w-[34px] text-left"><u>M</u>enu</span><Caret />
      </button>
      <Sep /><span className="w-[5px]" />
      <Pick label="Filtre de sélection" value="Pas de filtre de sélec..." w="w-[138px]" />
      <B n="filter" w="w-10" />
      <Pick label="Portée de sélection" value="Tout l'assemblage" w="w-[143px]" />
      <B n="reset" w="w-[38px]" />
      <B n="selasm" w="w-8" on /><B n="selcube" w="w-[34px]" /><B n="selbox" w="w-8" /><C />
      <B n="faceedge" w="w-[34px]" /><B n="cylcube" w="w-8" on />
      <Sep m="mx-2" />
      <B n="zoombox" w="w-8" /><B n="pan" w="w-8" /><B n="orbit" w="w-[34px]" /><B n="cubed" w="w-8" /><B n="cubegear" w="w-[34px]" /><B n="fit" w="w-8" /><C />
      <B n="bracket" w="w-[34px]" /><C /><B n="shaded" w="w-[34px]" on /><C />
      <B n="wirecube" w="w-[34px]" on /><B n="cylhex" w="w-8" on /><C />
      <B n="eyelist" w="w-[38px]" /><C w="w-3" /><B n="layers" w="w-[34px]" /><C w="w-3" />
      <label className="flex w-7 shrink-0 justify-center"><input type="checkbox" aria-label="Découper" className="size-[13px] appearance-none rounded-[3px] border border-[#444] bg-[#f3f4ef]" /></label>
      <B n="section" w="w-6" /><B n="win" w="w-[38px]" /><C w="w-3" />
      <B n="partwrench" w="w-[34px]" /><B n="partgreen" w="w-8" />
      <Sep m="mx-[7px]" />
      <B n="brush" w="w-8" /><B n="ruler" w="w-8" />
      <Sep />
      <B n="asmin" w="w-7" /><B n="asmplus" w="w-[34px]" /><B n="asmmove" w="w-[34px]" /><B n="three" w="w-8" />
      <button type="button" className="ml-[7px] w-[123px] shrink-0 text-left whitespace-nowrap">Exporter un fichier STEP</button>
      <button type="button" className="ml-1.5 w-[116px] shrink-0 text-left whitespace-nowrap">Exporter un fichier STL</button>
      <Sep m="ml-1" />
      <button type="button" aria-label="Options de la barre" className="mt-3 mr-[5px] ml-auto"><Caret /></button>
    </div>
  );
}

/* ---------- left side ---------- */

const RAIL = ["asm", "asmcons", "bracket", "bell", "books", "eye", "mold", "bracketdim", "blockdim", "info", "globe", "clock", "tools", "spectrum", "analysis"];

function Rail() {
  return (
    <aside className="flex w-[39px] shrink-0 flex-col border-r border-[#cbccd6]">
      <button type="button" aria-label="Paramètres" className="flex h-[30px] items-center justify-center"><Art n="gear" s={18} /></button>
      {RAIL.map((n, i) => (
        <button key={n} type="button" aria-label={n} className={"flex h-11 shrink-0 items-center justify-center border-r-3 pl-1.5 " + (i === 0 ? "border-[#00555c]" : "border-transparent")}>
          <Art n={n} />
        </button>
      ))}
    </aside>
  );
}

const COLS: [string, string][] = [
  ["Nom de pièce descriptif", "w-[251px]"], ["Mass...", "w-[50px]"], ["NX_Mater...", "w-[73px]"], ["Inf...", "w-9"],
  ["Em...", "w-[42px]"], ["L..", "w-6"], ["Modi...", "w-[51px]"], ["C", "w-4"],
];

function Row({ i }: { i: number }) {
  const first =
    i === 0 ? (
      <span className="flex h-[19px] items-center">
        <i className="ml-[9px] h-[10px] w-[9px] self-end border-t border-l border-dotted border-[#888]" />
        <span className="mr-[3px] ml-px"><Art n="folder" s={16} /></span>Sections
      </span>
    ) : i === 1 ? (
      <span className="flex h-[19px] items-center">
        <i className="ml-[9px] h-[10px] w-[9px] self-start border-b border-l border-dotted border-[#888]" />
        <span className="relative ml-0.5 size-3.5">
          <input type="checkbox" defaultChecked aria-label="Pièce1" className="block size-3.5 appearance-none border border-[#555] bg-white" />
          <svg viewBox="0 0 14 14" className="pointer-events-none absolute inset-0" fill="none" stroke="#e8112d" strokeWidth="2" aria-hidden="true"><path d="M3 7 L6 10.5 L11 3" /></svg>
        </span>
        <span className="mx-0.5"><Art n="part" s={15} /></span><b className="pl-px">Pièce1</b>
      </span>
    ) : null;
  return (
    <tr className="even:bg-[#f9f9f7]">
      {COLS.map(([name], c) => (
        <td key={name} className={"h-5 border-b border-b-[#e6e6e0] p-0 " + (c === 0 ? "border-r border-r-black" : c < 7 ? "border-r border-r-[#e6e6e0]" : "")}>
          {c === 0 && first}
          {c === 1 && i === 1 && <b className="pl-1">0.0000</b>}
          {c === 5 && i === 1 && <span className="flex justify-center"><Art n="floppy" s={16} /></span>}
        </td>
      ))}
    </tr>
  );
}

function Navigator() {
  return (
    <section className="flex w-[562px] shrink-0 flex-col border-r border-[#cbccd6] pr-[9px] pl-2">
      <header className="flex h-[26px] shrink-0 items-center pb-0.5">
        <Art n="asm" s={16} /><h1 className="ml-0.5">Navigateur d'assemblage</h1>
        <button type="button" aria-label="Agrandir" className="mr-0.5 ml-auto size-3 border border-t-2 border-[#0b0b2c]" />
      </header>
      <div className="flex min-h-0 flex-1 flex-col border border-[#cbccd6]">
        <div className="min-h-0 flex-1 overflow-hidden bg-white">
          <table className="w-full table-fixed border-separate border-spacing-0">
            <thead>
              <tr className="bg-[#f3f4ef]">
                {COLS.map(([name, w]) => (
                  <th key={name} scope="col" className={"h-[19px] overflow-hidden border-r border-b border-[#cbccd6] p-0 pt-0.5 pl-1.5 text-left font-normal whitespace-nowrap last:border-r-0 " + w}>{name}</th>
                ))}
              </tr>
            </thead>
            <tbody>{Array.from({ length: 38 }, (_, i) => <Row key={i} i={i} />)}</tbody>
          </table>
        </div>
        <div className="flex h-4 shrink-0 items-center bg-[#efefef] pl-[17px]"><i className="h-0.5 w-[390px] bg-[#878785]" /></div>
      </div>
      <div className="mt-[3px] h-1.5 shrink-0 border border-[#cbccd6] bg-[#e6e6e0]" />
      {["Aperçu", "Dépendances"].map((name) => (
        <button key={name} type="button" className="flex h-[25px] shrink-0 items-center border-b-2 border-[#cbccd6] pt-0.5 pl-[9px] text-[13px] text-[#0d7c92] last:mb-[5px] last:h-[23px] last:pt-0">
          <svg width="5" height="10" viewBox="0 0 5 10" fill="#0d7c92" className="mr-[9px]" aria-hidden="true"><path d="M0 0 L5 5 L0 10 Z" /></svg>{name}
        </button>
      ))}
    </section>
  );
}

const TOOLS = ["floppy", "sketch", "subtract", "extrude", "revolve", "hole", "blend", "fitgray", "winno", "treegray", "tree", "asmlens", "asmlens2", "asmfour", "asmmirror", "explode"];

function ToolStrip() {
  return (
    <aside className="flex w-[35px] shrink-0 flex-col items-center pt-1.5 pr-0.5">
      {TOOLS.map((n) => (
        <button key={n} type="button" aria-label={n} className={"flex h-8 w-[31px] shrink-0 items-center justify-center " + (n === "winno" ? "border border-[#a3a3a8] bg-[#deded6]" : "")}>
          <Art n={n} />
        </button>
      ))}
      <i className="mt-0.5 h-px w-[27px] shrink-0 bg-[#cbccd6]" />
      <button type="button" aria-label="Réduire la barre" className="mt-auto mb-1.5 ml-2 self-start">
        <svg width="4" height="6" viewBox="0 0 4 6" fill="#0b0b2c" aria-hidden="true"><path d="M4 0 L0 3 L4 6 Z" /></svg>
      </button>
    </aside>
  );
}

/* ---------- graphics window ---------- */

const TOP = "#5e79ff";
const DARK = "#3a4ca3";
const MID = "#455fd5";
const EDGE = "#282c40";
const SHADE = "#10184c";

function Model() {
  return (
    <svg viewBox="637 209 1282 846" className="size-full" aria-label="Modèle Pièce1" role="img">
      <defs>
        <filter id="soft" filterUnits="userSpaceOnUse" x="637" y="209" width="1282" height="846"><feGaussianBlur stdDeviation="6" /></filter>
        <clipPath id="cBack"><path d="M1152.4 440 H1426.5 V573 L1480 598 V650 H1090 V581 L1152.4 562.3 Z" /></clipPath>
        <clipPath id="cLeft"><path d="M943 612.7 L990.7 597.7 V560 H1010.2 V605.7 L1090 581 V760 H1027 L943 721 Z" /></clipPath>
        <clipPath id="cPocket"><path d="M990.7 560 H1010.2 V605.7 L1090 581 V690 H990.7 Z" /></clipPath>
        <clipPath id="cRight"><path d="M1560 675 H1629.5 L1669.1 692.3 V801.3 L1560 834 Z" /></clipPath>
        <linearGradient id="fil"><stop offset="0" stopColor="#3f57c8" /><stop offset=".25" stopColor="#5070fa" /><stop offset=".45" stopColor="#4864e0" /><stop offset=".7" stopColor="#5070fa" /><stop offset="1" stopColor="#3c50b0" /></linearGradient>
      </defs>
      <g stroke={EDGE} strokeLinejoin="round">
        <path fill={TOP} stroke="none" d="M943 721 L985 706 V613.400 L1152.4 562.3 L1191.7 580 L1279.6 550 L1306.6 550 L1378.3 587 L1426.5 573 L1638.8 671.3 L1669 801.3 L1487.3 856.3 L1336 900 L1213.7 845.3 Z" />
        <path fill="none" d="M1010 605.7 L1152.4 562.3 M1426.5 573 L1640 671.5" />
        <path fill={DARK} d="M1152.4 454 L1191.7 472.3 V580.7 L1152.4 562.3 Z" />
        <path fill={MID} d="M1191.7 472.3 L1279.6 445.3 V554 L1191.7 580.7 Z" />
        <path fill="url(#fil)" d="M1279.6 445.3 Q1293 441 1306.6 446.7 V555 Q1293 550 1279.6 554 Z" />
        <path fill={DARK} d="M1306.6 446.7 L1378.3 479.3 V587.7 L1306.6 555 Z" />
        <path fill={MID} d="M1378.3 479.3 L1426.5 464.7 V573 L1378.3 587.7 Z" />
        <path fill={TOP} d="M1152.4 454 L1302.8 408 L1426.5 464.7 L1378.3 479.3 L1306.6 446.7 Q1293 441 1279.6 445.3 L1191.7 472.3 Z" />
      </g>
      <g clipPath="url(#cBack)">
        <path d="M1152 562 L1191.7 581 L1279.6 554 Q1293 550 1306.6 555 L1378.3 588 L1427 573" fill="none" stroke={SHADE} strokeWidth="13" opacity=".72" filter="url(#soft)" />
      </g>
      <path d="M1152.4 562.3 L1191.7 580.7 L1279.6 554 Q1293 550 1306.6 555 L1378.3 587.7 L1426.5 573" fill="none" stroke={EDGE} />

      <g stroke={EDGE} strokeLinejoin="round">
        <path fill="#4259c8" d="M922.7 554 L1010.2 527.3 V636.3 L990.7 641.7 V597.7 L922.7 566 Z" />
        <path fill={DARK} d="M922.7 554 V566 Q907 560 922.7 554 Z" />
        <path fill={MID} d="M943 612.7 L990.7 597.7 V706 L943 721 Z" />
        <path fill={TOP} d="M819.5 555.7 L970.8 509.3 L1010.2 527.3 L922.7 554 Q907 559 922.7 566 L990.7 597.7 L943 612.7 Z" />
      </g>
      <g clipPath="url(#cLeft)">
        <path d="M943 721 L992 706" fill="none" stroke={SHADE} strokeWidth="14" opacity=".72" filter="url(#soft)" />
      </g>
      <g clipPath="url(#cPocket)">
        <path d="M984 643 L1012 635" fill="none" stroke={SHADE} strokeWidth="14" opacity=".72" filter="url(#soft)" />
      </g>
      <path d="M943 721 L990.7 706 V597.7 M990.7 641.7 L1010.2 636.3 V527.3" fill="none" stroke={EDGE} />

      <g stroke={EDGE} strokeLinejoin="round">
        <path fill={DARK} d="M1649.3 604.3 L1720 637.3 V647.3 L1649.3 668.3 Z" />
        <path fill={DARK} d="M1720 637.3 Q1729 642 1720 647.3 Z" />
        <path fill={DARK} d="M1629.5 674.7 L1669.1 692.3 V801.3 L1629.5 783 Z" />
      </g>
      <g clipPath="url(#cRight)">
        <path d="M1626 782 L1670 802" fill="none" stroke={SHADE} strokeWidth="15" opacity=".8" filter="url(#soft)" />
      </g>
      <g stroke={EDGE} strokeLinejoin="round">
        <path fill="none" d="M1629.5 674.7 V783 L1669.1 801.3" />
        <path fill={TOP} d="M1649.3 604.3 L1697.3 589.3 L1820.2 646.7 L1669.1 692.3 L1629.5 674.7 L1720 647.3 Q1729 642 1720 637.3 Z" />
        <path fill={DARK} d="M819.5 555.7 L943 612.7 V721 L1213.7 845.3 V737.3 L1336.6 794 V938.7 L819.5 700.7 Z" />
        <path fill={MID} d="M1336.6 794 L1487.3 748 V856.3 L1669.1 801.3 V692.3 L1820.2 646.7 V790.7 L1336.6 938.7 Z" />
        <path fill={TOP} d="M1213.7 737.3 L1261.7 722.3 L1335.7 756 Q1349 761 1362.7 756.3 L1447.7 729.7 L1487.3 748 L1336.6 794 Z" />
      </g>

      <path fill="#fff" stroke="#b5b5b5" strokeLinejoin="round" d="M713.7 924.3 L745 913.3 L772.7 926 V965 L740.3 975.3 L713.7 963.3 Z M713.7 924.3 L740.3 936 L772.7 926 M740.3 936 V975.3" />
      <path fill="#0a35c8" d="M740.5 926 V896 H737.7 L743 876.7 L748.3 896 H745.5 V926 Z" />
      <path fill="#37a23a" d="M773.3 933 L787 929 L785.5 927 L800 927.7 L787.5 936.5 L787 934 L773.3 938.5 Z" />
      <path fill="#cf2f33" d="M757 948 L774.5 956 L777.5 955 L789.5 965.7 L772 963 L773 960.5 L754.5 952 Z" />
      <g fontFamily="Noto Sans, sans-serif" fontSize="12" textAnchor="middle">
        <text x="743" y="872" fill="#2f62f0">Z</text>
        <text x="807" y="929" fill="#37a23a">Y</text>
        <text x="795" y="973" fill="#d5383c">X</text>
      </g>
    </svg>
  );
}

function Graphics() {
  return (
    <main className="flex min-w-0 flex-1 flex-col">
      <nav className="flex h-[26px] shrink-0 items-stretch border-b-2 border-[#007c92]">
        <button type="button" className="ml-[5px] flex w-[162px] items-center gap-[5px] whitespace-nowrap"><Art n="discover" s={16} />Centre de découverte</button>
        <button type="button" className="flex w-[121px] items-center gap-1 whitespace-nowrap"><Art n="cam" s={16} />Pièce1_FAO.prt</button>
        <button type="button" className="flex w-[100px] items-center gap-1 border-b-2 border-[#007c92] pt-0.5 pl-1.5 whitespace-nowrap"><Art n="bracket" s={16} />Pièce1.prt
          <svg width="9" height="9" viewBox="0 0 9 9" stroke="#0b0b2c" strokeWidth="2.2" className="ml-0.5" aria-hidden="true"><path d="M1 1 L8 8 M8 1 L1 8" /></svg>
        </button>
      </nav>
      <div className="min-h-0 flex-1 border border-t-0 border-[#cbccd6] bg-white"><Model /></div>
    </main>
  );
}

export default function App() {
  return (
    <div className="flex h-screen flex-col overflow-hidden bg-[#f3f4ef] font-['Noto_Sans',sans-serif] text-[11px] leading-4 text-[#0b0b2c]">
      <svg className="absolute size-0" aria-hidden="true">
        <defs>
          <linearGradient id="gO"><stop offset="0" stopColor="#ffab40" /><stop offset="1" stopColor="#e96f05" /></linearGradient>
          <linearGradient id="gG"><stop offset="0" stopColor="#f2f2f2" /><stop offset="1" stopColor="#a6a6a6" /></linearGradient>
          <linearGradient id="gD"><stop offset="0" stopColor="#c6c6c6" /><stop offset="1" stopColor="#7f7f7f" /></linearGradient>
          <linearGradient id="gS"><stop offset="0" stopColor="#eeeeec" /><stop offset="1" stopColor="#c4c4c2" /></linearGradient>
          <linearGradient id="gR" x2="0" y2="1"><stop offset="0" stopColor="#f00" /><stop offset=".3" stopColor="#ff0" /><stop offset=".55" stopColor="#2f2" /><stop offset=".78" stopColor="#0ff" /><stop offset="1" stopColor="#00f" /></linearGradient>
        </defs>
      </svg>
      <TitleBar />
      <TabRow />
      <Ribbon />
      <SelectionBar />
      <div className="flex min-h-0 flex-1">
        <Rail />
        <Navigator />
        <ToolStrip />
        <Graphics />
      </div>
      <footer className="h-6 shrink-0 border-t border-b-2 border-t-[#cbccd6] border-b-[#23233c]" />
    </div>
  );
}
